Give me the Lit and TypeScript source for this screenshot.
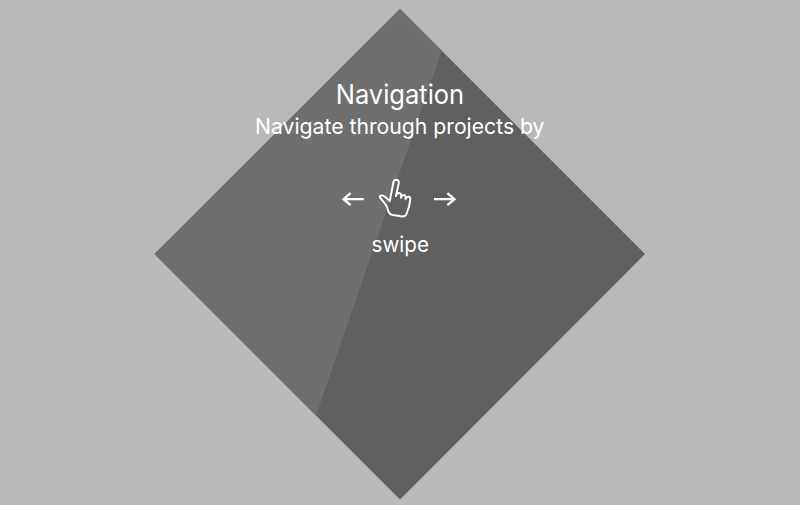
import { LitElement, html, css } from "lit";
import { customElement } from "lit/decorators.js";

@customElement("app-root")
class AppRoot extends LitElement {
  static styles = css`
    :host {
      display: block;
      position: relative;
      width: 800px;
      height: 505px;
      overflow: hidden;
      background: #bab8b9;
      color: #fff;
      font-family: Inter, "Open Sans", sans-serif;
    }
    .diamond {
      position: absolute;
      inset: 0;
    }
    .content {
      position: relative;
      display: flex;
      flex-direction: column;
      align-items: center;
      padding-top: 74px;
    }
    h1, p { margin: 0; font-weight: 400; white-space: nowrap; }
    svg { display: block; overflow: visible; }
    text { fill: #fff; font-weight: 400; }
    .title { font-size: 27px; }
    .body { font-size: 21.5px; }
  `;

  render() {
    return html`
      <svg class="diamond" width="800" height="505" viewBox="0 0 800 505">
        <path d="M400 9 645 254 400 499.5 154.5 254Z" fill="#606060" />
        <path d="M400 9 441.7 50.7 316 415.5 154.5 254Z" fill="#6f6f6f" />
      </svg>
      <div class="content">
        <h1><svg width="320" height="36">
          <text class="title" x="95.7" y="30.4" textLength="128.5" lengthAdjust="spacingAndGlyphs">Navigation</text>
        </svg></h1>
        <p><svg width="320" height="36">
          <text class="body" x="15" y="24.2" textLength="289.5" lengthAdjust="spacingAndGlyphs">Navigate through projects by</text>
        </svg></p>
        <svg width="140" height="78" viewBox="330 146 140 78" fill="none" stroke="#fff">
          <path d="M363.8 199.2H344M350.6 193.2 343.5 199.2 350.6 205.2" stroke-width="2.3" />
          <path d="M434 199.2H454M447.4 193.2 454.5 199.2 447.4 205.2" stroke-width="2.3" />
          <path stroke-width="1.9" stroke-linejoin="round" stroke-linecap="round"
            d="M389.8 201.2 393.3 182.5C394 178.6 399.5 178.8 398.8 183.2L395.8 196.3C397.5 191.3 401.7 192 401 197.8C402.6 193.6 406.3 194 405.5 199.2C407 195.3 411 196.2 410.2 200.2C409.8 204.5 408.6 209 406.8 213.2C405.8 216.2 404 216.9 400.8 216.3C397.7 215.2 394 215.9 391.2 214.7C388 213.5 388.2 210.2 387 207C385.9 203.9 382.3 200.8 380.1 197.6C378.9 195.5 381.6 194.8 383.8 196C386.5 197.5 388 199.5 389.8 201.2Z" />
        </svg>
        <p><svg width="100" height="40">
          <text class="body" x="21.5" y="27.9" textLength="57.5" lengthAdjust="spacingAndGlyphs">swipe</text>
        </svg></p>
      </div>
    `;
  }
}
